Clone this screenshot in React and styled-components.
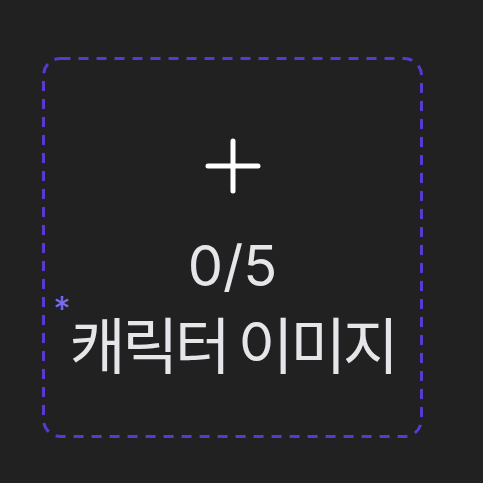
import React from "react";
import styled, { createGlobalStyle } from "styled-components";

const Global = createGlobalStyle`
  html, body { margin: 0; padding: 0; background: #212121; }
  body { font-family: "Inter", "Noto Sans CJK KR", sans-serif; }
`;

const Page = styled.div`
  width: 483px;
  height: 483px;
  box-sizing: border-box;
  padding: 57px 0 0 42px;
  background: #212121;
`;

const Upload = styled.button`
  position: relative;
  width: 381px;
  height: 381px;
  box-sizing: border-box;
  border: none;
  border-radius: 18px;
  background: transparent;
  display: flex;
  flex-direction: column;
  align-items: center;
  justify-content: flex-start;
  padding: 81px 0 0;
  cursor: pointer;
  font-family: inherit;
`;

const DashedFrame = styled.svg`
  position: absolute;
  inset: 0;
  width: 100%;
  height: 100%;
  pointer-events: none;
  overflow: visible;
`;

const PlusIcon = styled.svg`
  width: 56px;
  height: 56px;
  display: block;
  margin-bottom: 40px;
`;

const Count = styled.div`
  color: #e6e6ea;
  font-family: "Inter", sans-serif;
  font-size: 56px;
  line-height: 64px;
  font-weight: 400;
`;

const Label = styled.div`
  position: relative;
  margin-top: 6px;
  color: #e6e6ea;
  font-family: "Noto Sans CJK KR", sans-serif;
  font-size: 61px;
  line-height: 78px;
  font-weight: 400;
  letter-spacing: -3.5px;
`;

const Required = styled.span`
  position: absolute;
  left: -16px;
  top: -12px;
  color: #7b6aef;
  font-family: "Inter", sans-serif;
  font-size: 34px;
  line-height: 34px;
  letter-spacing: 0;
`;

export default function App() {
  return (
    <>
      <Global />
      <Page>
        <Upload type="button">
          <DashedFrame>
            <rect
              x="1.5"
              y="1.5"
              width="378"
              height="378"
              rx="17"
              fill="none"
              stroke="#5a38d2"
              strokeWidth="3"
              strokeDasharray="10 8"
            />
          </DashedFrame>
          <PlusIcon viewBox="0 0 56 56" fill="none">
            <path d="M28 3v50M3 28h50" stroke="#ffffff" strokeWidth="5" strokeLinecap="round" />
          </PlusIcon>
          <Count>0/5</Count>
          <Label>
            <Required>*</Required>
            캐릭터 이미지
          </Label>
        </Upload>
      </Page>
    </>
  );
}
